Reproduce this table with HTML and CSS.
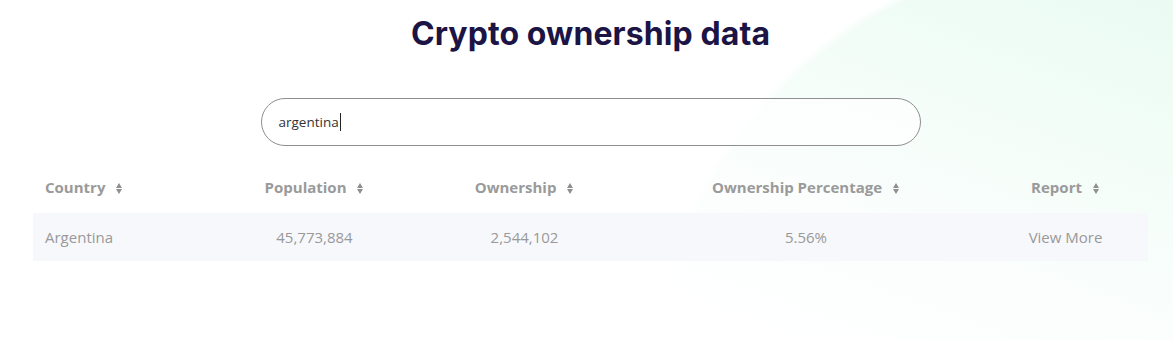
FILE: index.html
```html
<!DOCTYPE html>
<html lang="en">
<head>
<meta charset="utf-8">
<title>Crypto ownership data</title>
<link rel="stylesheet" href="styles.css">
</head>
<body>
<div class="bg-shape"></div>
<main class="page">
  <h1 class="title">Crypto ownership data</h1>
  <div class="search">
    <span class="search-text">argentina</span><span class="caret"></span>
  </div>
  <table class="data">
    <colgroup>
      <col class="c1"><col class="c2"><col class="c3"><col class="c4"><col class="c5">
    </colgroup>
    <thead>
      <tr>
        <th class="left">Country <span class="sort"></span></th>
        <th>Population <span class="sort"></span></th>
        <th>Ownership <span class="sort"></span></th>
        <th>Ownership Percentage <span class="sort"></span></th>
        <th>Report <span class="sort"></span></th>
      </tr>
    </thead>
    <tbody>
      <tr>
        <td class="left">Argentina</td>
        <td>45,773,884</td>
        <td>2,544,102</td>
        <td>5.56%</td>
        <td>View More</td>
      </tr>
    </tbody>
  </table>
</main>
</body>
</html>
```

FILE: styles.css
```css
html, body {
  margin: 0;
  padding: 0;
  height: 100%;
}
body {
  background: #ffffff;
  font-family: "Open Sans", "Liberation Sans", sans-serif;
  position: relative;
  overflow: hidden;
}
.bg-shape {
  position: absolute;
  inset: 0;
  background: linear-gradient(200deg, #eafbf2 0%, #f3fdf8 22%, #fbfefd 45%, #ffffff 65%);
  -webkit-mask-image: radial-gradient(circle at 1100px 400px, #000 443px, transparent 453px);
  mask-image: radial-gradient(circle at 1100px 400px, #000 443px, transparent 453px);
  pointer-events: none;
  z-index: 0;
}
.page {
  position: relative;
  z-index: 1;
  width: 1115px;
  margin-left: 33px;
  display: flex;
  flex-direction: column;
  align-items: center;
}
.title {
  font-family: "Inter", "Lato", sans-serif;
  font-weight: 700;
  font-size: 32px;
  letter-spacing: 0.1px;
  color: #1b1445;
  margin: 14px 0 0;
  line-height: 40px;
}
.search {
  margin-top: 44px;
  width: 660px;
  height: 48px;
  border: 1px solid #8f8f8f;
  border-radius: 24px;
  background: rgba(255,255,255,0.6);
  display: flex;
  align-items: center;
  padding-left: 17px;
  box-sizing: border-box;
  font-size: 13.5px;
  color: #333333;
}
.caret {
  display: inline-block;
  width: 1px;
  height: 18px;
  background: #222;
  margin-left: 1px;
}
.data {
  width: 1115px;
  margin-top: 24px;
  border-collapse: collapse;
  table-layout: fixed;
  font-size: 15px;
}
.c1 { width: 176px; }
.c2 { width: 211px; }
.c3 { width: 209px; }
.c4 { width: 354px; }
.c5 { width: 165px; }
.data th {
  height: 34px;
  font-weight: 700;
  color: #9a9a9a;
  text-align: center;
  padding: 0 0 9px;
  vertical-align: middle;
  white-space: nowrap;
}
.data td {
  height: 48px;
  background: #f7f8fc;
  color: #999999;
  text-align: center;
  padding: 0;
  vertical-align: middle;
}
.data .left {
  text-align: left;
  padding-left: 12px;
}
.sort {
  display: inline-block;
  position: relative;
  width: 7px;
  height: 11px;
  margin-left: 7px;
  vertical-align: -1px;
}
.sort::before, .sort::after {
  content: "";
  position: absolute;
  left: 0;
  border-left: 3.5px solid transparent;
  border-right: 3.5px solid transparent;
}
.sort::before {
  top: 0;
  border-bottom: 5px solid #8f8f8f;
}
.sort::after {
  bottom: 0;
  border-top: 5px solid #8f8f8f;
}
```
